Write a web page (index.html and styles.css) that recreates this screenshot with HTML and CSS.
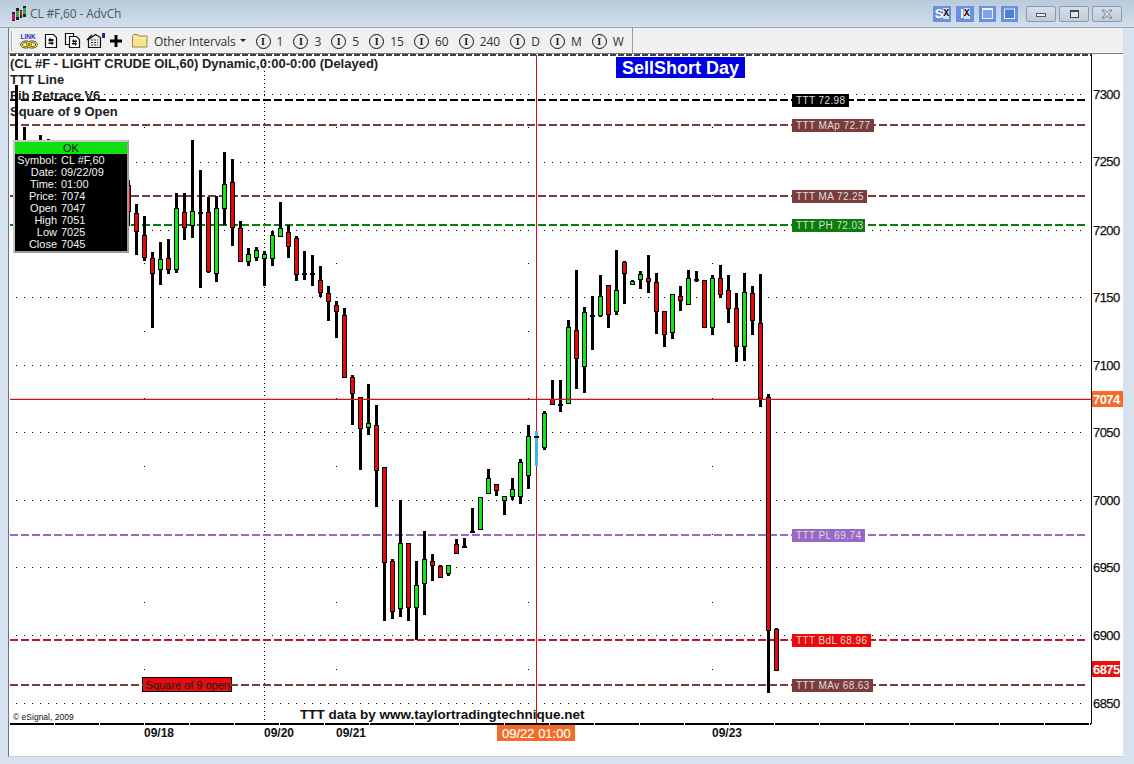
FILE: index.html
```html
<!DOCTYPE html>
<html lang="en">
<head>
	<meta charset="UTF-8">
	<title>CL #F,60 - AdvCh</title>
	<link rel="stylesheet" href="styles.css">
</head>
<body>
<div class="window">
	<div class="titlebar">
		<svg class="appicon" width="16" height="16" viewBox="0 0 16 16">
			<rect x="1" y="6" width="3" height="9" fill="#222"/><rect x="1" y="8" width="3" height="6" fill="#c81058"/>
			<rect x="5" y="2" width="3" height="12" fill="#222"/><rect x="5" y="5" width="3" height="6" fill="#30b030"/>
			<rect x="9" y="4" width="2" height="8" fill="#222"/><rect x="9" y="5" width="2" height="4" fill="#c81058"/>
			<rect x="12" y="0" width="3" height="11" fill="#222"/><rect x="12" y="2" width="3" height="6" fill="#30b030"/>
		</svg>
		<span class="title">CL #F,60 - AdvCh</span>
		<div class="tools">
			<span class="toolbtn wide">S<i>X</i></span>
			<span class="toolbtn wide">I<i>X</i></span>
			<span class="toolbtn"><b class="mini"></b></span>
			<span class="toolbtn"><b class="mini corner"></b></span>
		</div>
		<div class="winbtns">
			<span class="winbtn"><b class="min"></b></span>
			<span class="winbtn"><b class="max"></b></span>
			<span class="winbtn">
				<svg width="14" height="10" viewBox="0 0 14 10"><path d="M2 1h2.500l2.500 2.500 2.500-2.500h2.500l-3.500 4 3.500 4h-2.500l-2.500-2.500-2.500 2.500h-2.500l3.500-4z" fill="#dfe6ee" stroke="#5a6570" stroke-width=".8"/></svg>
			</span>
		</div>
	</div>
	<div class="client">
		<div class="toolbar">
			<span class="grip"></span>
			<svg class="tb link" width="18" height="18" viewBox="0 0 18 18">
				<text x="0.500" y="7" class="linktext">LINK</text>
				<ellipse cx="6" cy="12.500" rx="4.500" ry="2.700" fill="none" stroke="#222" stroke-width="2.400"/>
				<ellipse cx="12" cy="12.500" rx="4.500" ry="2.700" fill="none" stroke="#222" stroke-width="2.400"/>
				<ellipse cx="6" cy="12.500" rx="4.500" ry="2.700" fill="none" stroke="#f4d810" stroke-width="1.200"/>
				<ellipse cx="12" cy="12.500" rx="4.500" ry="2.700" fill="none" stroke="#f4d810" stroke-width="1.200"/>
			</svg>
			<svg class="tb doc1" width="14" height="16" viewBox="0 0 14 16">
				<path d="M1.500 1.500h8l3 3v10h-11z" fill="#fff" stroke="#111" stroke-width="1.200"/>
				<path d="M4 7l2.500-2.500v1.500h3v2h-3v1.500zM10 10l-2.500 2.500v-1.500h-3v-1.500h3v-1.500z" fill="#111"/>
			</svg>
			<svg class="tb doc2" width="17" height="17" viewBox="0 0 17 17">
				<path d="M1.500 1.500h8v11h-8z" fill="#fff" stroke="#111" stroke-width="1.200"/>
				<path d="M5.500 4.500h7l3 3v8h-10z" fill="#fff" stroke="#111" stroke-width="1.200"/>
				<path d="M8 9l2-2v1.500h3v1.500h-3v1.500zM13 12l-2 2v-1.500h-3v-1.500h3v-1.500z" fill="#111"/>
			</svg>
			<svg class="tb doc3" width="20" height="18" viewBox="0 0 20 18">
				<path d="M2.500 7.500l7-5 5 3v10h-12z" fill="#eee" stroke="#111" stroke-width="1.200"/>
				<path d="M5 8h7M5 10.500h7M5 13h7" stroke="#333" stroke-width="1.200" stroke-dasharray="2 1"/>
				<path d="M1 8l5-5" stroke="#111" stroke-width="1.500"/>
				<rect x="16" y="1" width="3" height="5" fill="#1c2f90"/>
			</svg>
			<svg class="tb plus" width="12" height="12" viewBox="0 0 12 12"><path d="M4.500 0h3v4.500h4.500v3h-4.500v4.500h-3v-4.500h-4.500v-3h4.500z" fill="#000"/></svg>
			<svg class="tb folder" width="16" height="14" viewBox="0 0 16 14">
				<path d="M.5 3v-1.500l1-1h4l1 1.500h8.500v11h-14.500z" fill="#f6e48a" stroke="#9a8a50"/>
				<path d="M1.500 4h13" stroke="#fff6c0"/>
			</svg>
			<span class="tbtext other">Other Intervals</span>
			<span class="caret"></span>
			<div class="intervals">
				<span class="interval"><i>I</i>1</span>
				<span class="interval"><i>I</i>3</span>
				<span class="interval"><i>I</i>5</span>
				<span class="interval"><i>I</i>15</span>
				<span class="interval"><i>I</i>60</span>
				<span class="interval"><i>I</i>240</span>
				<span class="interval"><i>I</i>D</span>
				<span class="interval"><i>I</i>M</span>
				<span class="interval"><i>I</i>W</span>
			</div>
			<span class="tbsep"></span>
		</div>
		<div class="chart">
			<svg id="plot" class="plot" width="1114" height="702" viewBox="9 54 1114 702">
				<g id="grid"></g>
				<line class="dash black" x1="10" y1="55" x2="1091" y2="55"/>
				<line class="dash black thick" x1="10" y1="100" x2="1088" y2="100"/>
				<line class="dash brown" x1="10" y1="125" x2="1088" y2="125"/>
				<line class="dash brown" x1="10" y1="196" x2="1088" y2="196"/>
				<line class="dash green" x1="10" y1="225" x2="1088" y2="225"/>
				<line class="dash purple" x1="10" y1="535" x2="1088" y2="535"/>
				<line class="dash red" x1="10" y1="640" x2="1088" y2="640"/>
				<line class="dash brown" x1="10" y1="685" x2="1088" y2="685"/>
				<line class="dash black bottom" x1="10" y1="724" x2="1091" y2="724"/>

				<g class="legend">
					<text x="10" y="68">(CL #F - LIGHT CRUDE OIL,60) Dynamic,0:00-0:00 (Delayed)</text>
					<text x="10" y="84">TTT Line</text>
					<text x="10" y="100">Fib Retrace V6</text>
					<text x="10" y="116">Square of 9 Open</text>
				</g>

				<g id="candles"></g>

				<line class="cursor" x1="536.500" y1="55" x2="536.500" y2="723"/>
				<line class="cursor wide" x1="10" y1="399.400" x2="1092" y2="399.400"/>
				<g id="hotcandle"></g>

				<rect class="fill-blue" x="616" y="57" width="129" height="21"/>
				<text class="sellshort" x="680.500" y="74">SellShort Day</text>

				<g class="tags">
					<rect class="fill-black" x="792" y="94" width="57" height="13"/><text x="796" y="104">TTT 72.98</text>
					<rect class="fill-brown" x="792" y="119" width="82" height="13"/><text x="796" y="129">TTT MAp 72.77</text>
					<rect class="fill-brown" x="792" y="190" width="75" height="13"/><text x="796" y="200">TTT MA 72.25</text>
					<rect class="fill-green" x="792" y="219" width="73" height="13"/><text x="796" y="229">TTT PH 72.03</text>
					<rect class="fill-purple" x="792" y="529" width="73" height="13"/><text x="796" y="539">TTT PL 69.74</text>
					<rect class="fill-red" x="792" y="634" width="79" height="13"/><text x="796" y="644">TTT BdL 68.96</text>
					<rect class="fill-brown" x="792" y="679" width="81" height="13"/><text x="796" y="689">TTT MAv 68.63</text>
				</g>

				<rect class="square-box" x="142.500" y="677.500" width="89" height="14"/>
				<line class="dash brown" x1="142" y1="685" x2="232" y2="685"/>
				<text class="square-text" x="188" y="688.500">Square of 9 open</text>

				<text class="esignal" x="13" y="720">© eSignal, 2009</text>
				<text class="credit" x="300" y="719">TTT data by www.taylortradingtechnique.net</text>

				<line class="axis" x1="1091.500" y1="54" x2="1091.500" y2="724"/>
				<g class="prices">
					<text x="1093" y="99">7300</text>
					<text x="1093" y="166">7250</text>
					<text x="1093" y="235">7200</text>
					<text x="1093" y="302">7150</text>
					<text x="1093" y="370">7100</text>
					<text x="1093" y="437">7050</text>
					<text x="1093" y="505">7000</text>
					<text x="1093" y="572">6950</text>
					<text x="1093" y="640">6900</text>
					<text x="1093" y="708">6850</text>
				</g>
				<rect class="fill-orange" x="1092" y="391" width="31" height="16"/>
				<text class="price-hot" x="1093" y="404">7074</text>
				<rect class="fill-hotred" x="1092" y="661" width="28" height="16"/>
				<text class="price-hot" x="1093" y="674">6875</text>

				<g class="dates">
					<text x="144" y="737">09/18</text>
					<text x="264" y="737">09/20</text>
					<text x="336" y="737">09/21</text>
					<text x="712" y="737">09/23</text>
				</g>
				<rect class="fill-orange" x="497" y="725" width="78" height="16"/>
				<text class="date-hot" x="502" y="738">09/22 01:00</text>
			</svg>
			<div class="popup">
				<div class="popup-ok">OK</div>
				<div class="popup-row"><span>Symbol:</span><span>CL #F,60</span></div>
				<div class="popup-row"><span>Date:</span><span>09/22/09</span></div>
				<div class="popup-row"><span>Time:</span><span>01:00</span></div>
				<div class="popup-row"><span>Price:</span><span>7074</span></div>
				<div class="popup-row"><span>Open</span><span>7047</span></div>
				<div class="popup-row"><span>High</span><span>7051</span></div>
				<div class="popup-row"><span>Low</span><span>7025</span></div>
				<div class="popup-row"><span>Close</span><span>7045</span></div>
			</div>
		</div>
	</div>
</div>
<script src="chart.js"></script>
</body>
</html>
```
FILE: styles.css
```css
*{box-sizing:border-box;}
html,body{margin:0;padding:0;}
body{width:1134px;height:764px;overflow:hidden;background:#fff;}

.window{
	height:764px;
	display:flex;
	flex-direction:column;
	background:#d6e3ef;
	border-radius:6px 6px 0 0;
}
.titlebar{
	height:28px;
	display:flex;
	align-items:center;
	padding:0 12px 0 11px;
	background:linear-gradient(#b9cada,#c6d6e5 60%,#d4e1ed);
	border-bottom:1px solid #97a3ae;
}
.appicon{margin-right:3px;}
.title{font:12px "Open Sans","Liberation Sans",sans-serif;color:#4e5a64;letter-spacing:-.15px;}
.tools{margin-left:auto;display:flex;gap:5px;margin-right:8px;}
.toolbtn{
	width:17px;height:16px;
	background:#6a91de;
	color:#fff;
	font:bold 13px/16px "Liberation Sans",sans-serif;
	text-align:center;
	display:flex;
	align-items:center;
	justify-content:center;
}
.toolbtn.wide{width:18px;}
.toolbtn i{font:bold 10px "Liberation Mono",monospace;color:#111;background:#dde;width:6px;}
.mini{display:block;width:11px;height:11px;border:1px solid #e8f0ff;border-top-width:2px;background:#7ea2e6;}
.mini.corner{background:#4d7fd2;border-top-color:#9bbcf0;}
.winbtns{display:flex;gap:3px;}
.winbtn{
	width:30px;height:16px;
	border:1px solid #8d9aa8;
	border-radius:2px;
	background:linear-gradient(#d4dfea,#bfcddb);
	display:flex;
	align-items:center;
	justify-content:center;
}
.min{display:block;width:10px;height:4px;margin-top:3px;border:1px solid #555;background:#eef;}
.max{display:block;width:9px;height:8px;border:1px solid #444;border-top-width:2px;background:#dfe7ef;}

.client{
	margin:0 11px 7px 8px;
	flex:1;
	display:flex;
	flex-direction:column;
	background:#fff;
	border-left:1px solid #6d7680;
	border-bottom:1px solid #c6d2dc;
}
.toolbar{
	height:26px;
	flex:none;
	display:flex;
	align-items:center;
	background:#f0f0f0;
	border-bottom:1px solid #7c7c7c;
	position:relative;
}
.grip{width:2px;height:20px;margin-left:2px;background:#a8a8a8;border-right:1px solid #fff;}
.tb{flex:none;}
.link{margin-left:7px;}
.linktext{font:bold 6.500px "Liberation Sans",sans-serif;fill:#1030c0;}
.doc1{margin-left:6px;}
.doc2{margin-left:6px;}
.doc3{margin-left:5px;}
.plus{margin-left:4px;}
.folder{margin-left:10px;}
.tbtext{font:12px "Open Sans","Liberation Sans",sans-serif;color:#333;letter-spacing:-.15px;padding-top:2px;}
.other{margin-left:6px;}
.caret{
	margin-left:4px;
	border:3px solid transparent;
	border-top:3px solid #222;
	margin-top:3px;
}
.intervals{display:flex;margin-left:10px;}
.interval{
	display:flex;
	align-items:center;
	gap:6px;
	margin-right:10px;
	padding-top:1px;
	font:12px "Open Sans","Liberation Sans",sans-serif;
	color:#333;
}
.interval:last-child{margin-right:8px;}
.interval i{
	width:15px;height:15px;
	border:1px solid #111;
	border-radius:50%;
	font:bold 10px/13px "Liberation Serif",serif;
	color:#111;
	text-align:center;
}
.tbsep{width:1px;height:25px;background:#999;}

.chart{flex:1;position:relative;}
.plot{display:block;}
.plot text{font-family:"Liberation Sans",Arial,sans-serif;}

.dash{fill:none;stroke-width:2;stroke-dasharray:8 3;}
.dash.black{stroke:#000;stroke-dasharray:6 2;stroke-width:1.500;}
.dash.thick{stroke-width:2;stroke-dasharray:8 3;}
.dash.bottom{stroke-width:2;stroke-dasharray:44 1;}
.dash.brown{stroke:#7c3c3c;}
.dash.green{stroke:#0a7d0a;}
.dash.purple{stroke:#9868c8;}
.dash.red{stroke:#c21622;}
.griddot{fill:#000;}
.griddash{stroke:#000;stroke-width:1;stroke-dasharray:1 3;}
.wick{fill:#000;}
.wick.blue{fill:#45b6d8;}
.body-red{fill:#e80808;stroke:#000;}
.body-green{fill:#12e812;stroke:#000;}
.cursor{stroke:#cf1218;stroke-width:1;}
.cursor.wide{stroke-width:1.400;}
.axis{stroke:#111;stroke-width:1;}

.legend text{font-size:13px;font-weight:bold;fill:#222;}
.sellshort{font-size:18px;font-weight:bold;fill:#fff;text-anchor:middle;}
.tags text{font-size:10px;fill:#ddd;letter-spacing:.4px;}
.fill-blue{fill:#0000e0;}
.fill-black{fill:#000;}
.fill-brown{fill:#7c3c3c;}
.fill-green{fill:#0a7d0a;}
.fill-purple{fill:#9868c8;}
.fill-red{fill:#f00808;}
.fill-orange{fill:#f56a26;}
.fill-hotred{fill:#e81010;}
.square-box{fill:#e80c0c;stroke:#000;}
.square-text{font-size:11px;fill:#3c0808;text-anchor:middle;}
.esignal{font-size:8.500px;fill:#111;}
.credit{font-size:13.500px;font-weight:bold;fill:#111;}
.prices text{font-size:13px;fill:#111;stroke:#111;stroke-width:.25px;letter-spacing:-.6px;}
.price-hot{font-size:13px;font-weight:bold;fill:#fff;letter-spacing:-.6px;}
.dates text{font-size:12px;font-weight:bold;fill:#111;}
.date-hot{font-size:13px;fill:#fff;stroke:#fff;stroke-width:.2px;}

.popup{
	position:absolute;
	left:4px;top:86px;
	width:116px;height:113px;
	background:#000;
	border:2px solid #9a9a9a;
	border-top-color:#c8c8c8;
	border-left-color:#c8c8c8;
	font:11px "Liberation Sans",Arial,sans-serif;
	color:#f2f2f2;
}
.popup-ok{
	height:12px;
	background:#10e010;
	color:#111;
	text-align:center;
	line-height:13px;
}
.popup-row{display:flex;height:12px;line-height:12px;}
.popup-row span:first-child{width:42px;text-align:right;margin-right:4px;}
```
FILE: chart.js
```js
// x, high, low, top of body, bottom of body, colour (r red, g green, d doji tick, n no body)
var candles = [
	[16,85,145,0,0,'n'],[24,127,145,0,0,'n'],[40,135,145,0,0,'n'],[48,139,145,0,0,'n'],
	[128,180,226,185,211,'r'],
	[136,204,255,213,231,'r'],[144,216,261,235,257,'r'],[152,252,328,258,273,'r'],[160,242,285,259,269,'g'],
	[168,239,274,258,269,'r'],[176,193,273,208,269,'g'],[184,193,240,212,227,'r'],[192,140,238,211,225,'g'],
	[200,170,288,212,0,'d'],[208,197,273,212,271,'r'],[216,196,282,208,273,'g'],[224,152,225,184,208,'g'],
	[232,159,246,182,227,'r'],[240,221,262,228,261,'r'],[248,248,266,254,261,'g'],[256,247,261,250,257,'g'],
	[264,251,286,254,258,'g'],[272,231,266,235,258,'g'],[280,202,236,228,236,'g'],[288,225,258,232,246,'r'],
	[296,236,281,238,274,'r'],[304,251,280,273,0,'d'],[312,255,286,273,0,'d'],[320,266,297,280,292,'r'],
	[328,286,321,293,301,'r'],[336,301,338,305,311,'r'],[344,308,377,315,377,'r'],[352,375,425,377,393,'r'],
	[360,397,470,397,428,'r'],[368,384,435,423,427,'g'],[376,405,507,425,470,'r'],[384,467,621,467,562,'r'],
	[392,559,619,561,611,'r'],[400,500,617,543,608,'g'],[408,543,621,543,607,'r'],[416,561,640,585,607,'g'],
	[424,531,615,559,583,'g'],[432,554,581,561,565,'r'],[440,565,577,566,577,'r'],[448,565,576,565,573,'g'],
	[456,539,553,544,553,'r'],[464,538,547,546,0,'d'],[472,508,532,531,0,'d'],[480,497,529,497,529,'g'],
	[488,469,493,478,493,'g'],[496,484,496,484,490,'r'],[504,496,515,496,500,'g'],[512,478,500,489,496,'g'],
	[520,459,504,462,496,'g'],[528,425,489,436,475,'g'],[544,411,450,413,447,'g'],
	[552,380,404,399,404,'r'],[560,380,412,404,0,'d'],[568,320,403,327,403,'g'],[576,270,389,330,358,'r'],
	[584,307,393,312,366,'g'],[592,296,350,315,0,'d'],[600,275,317,296,315,'g'],[608,285,328,285,314,'r'],
	[616,250,315,290,311,'g'],[624,261,304,262,273,'r'],[632,280,285,281,284,'g'],[640,271,289,274,279,'g'],
	[648,255,293,278,281,'r'],[656,273,334,282,311,'r'],[664,311,347,311,334,'r'],[672,294,339,294,332,'g'],
	[680,286,311,296,300,'r'],[688,270,304,278,304,'g'],[696,271,282,279,0,'d'],[704,280,327,280,327,'r'],
	[712,275,335,278,327,'g'],[720,265,298,278,294,'r'],[728,275,323,290,308,'r'],[736,293,362,308,346,'r'],
	[744,273,361,292,346,'g'],[752,286,335,293,320,'r'],[760,274,407,323,398,'r'],[768,394,693,397,630,'r'],
	[776,628,671,629,670,'r']
];
var NS = 'http://www.w3.org/2000/svg';

function add(parent, tag, attrs) {
	var el = document.createElementNS(NS, tag);
	for (var k in attrs) el.setAttribute(k, attrs[k]);
	parent.appendChild(el);
	return el;
}

var grid = document.getElementById('grid');
var g = document.getElementById('candles');

// horizontal dotted price lines
var levels = [94, 162, 230, 297, 365, 432, 500, 567, 635, 703];
levels.forEach(function(y) {
	for (var x = 16; x < 1088; x += 8) {
		add(grid, 'rect', {x: x, y: y, width: 1, height: 1, 'class': 'griddot'});
	}
});
// vertical date lines only show as single dots between the levels
var mids = [127, 195, 263, 331, 398, 466, 534, 602, 669];
[144, 336, 528, 712].forEach(function(x) {
	mids.forEach(function(y) {
		add(grid, 'rect', {x: x, y: y, width: 1, height: 1, 'class': 'griddot'});
	});
});
add(grid, 'line', {x1: 264.5, y1: 55, x2: 264.5, y2: 722, 'class': 'griddash'});

candles.forEach(function(c) {
	var x = c[0];
	add(g, 'rect', {x: x - 1, y: c[1], width: 3, height: c[2] - c[1], 'class': 'wick'});
	if (c[5] === 'd') {
		add(g, 'rect', {x: x - 2, y: c[3], width: 5, height: 2, 'class': 'wick'});
	} else if (c[5] !== 'n') {
		add(g, 'rect', {
			x: x - 1.5, y: c[3] + 0.5, width: 4, height: c[4] - c[3],
			'class': c[5] === 'r' ? 'body-red' : 'body-green'
		});
	}
});

// the candle under the cursor is drawn thin and blue, on top of the cursor
var hot = document.getElementById('hotcandle');
add(hot, 'rect', {x: 535, y: 431, width: 3, height: 35, 'class': 'wick blue'});
add(hot, 'rect', {x: 534, y: 436, width: 5, height: 2, 'class': 'wick'});
```
